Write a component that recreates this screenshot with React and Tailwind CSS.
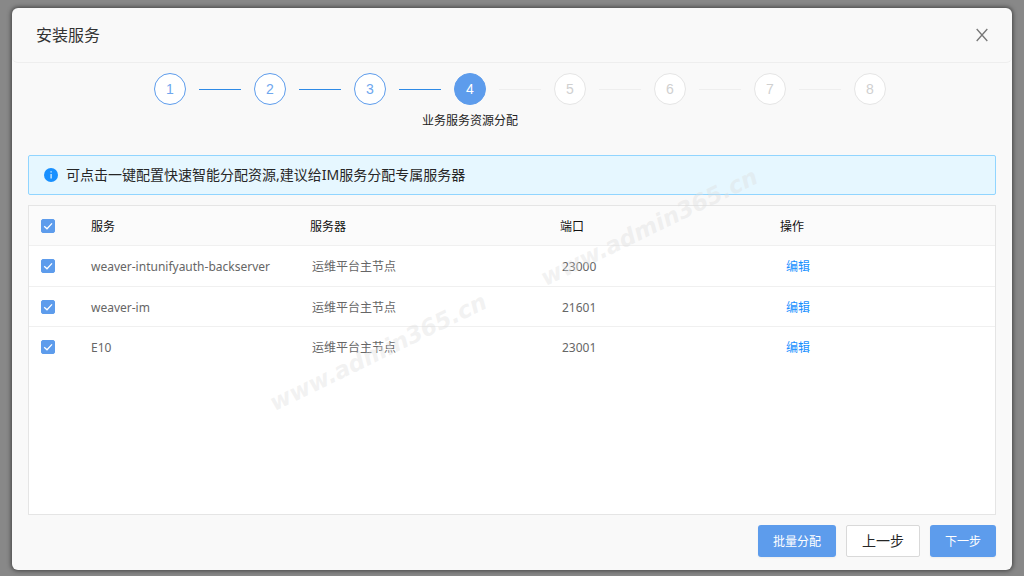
import { useState } from 'react';
import clsx from 'clsx';

const STEPS = ['', '', '', '业务服务资源分配', '', '', '', ''];
const CURRENT = 3;

const SERVICES = [
  { name: 'weaver-intunifyauth-backserver', server: '运维平台主节点', port: 23000 },
  { name: 'weaver-im', server: '运维平台主节点', port: 21601 },
  { name: 'E10', server: '运维平台主节点', port: 23001 },
];

function Checkbox({ label, checked, onChange }) {
  return (
    <span className="grid h-3.5 w-3.5">
      <input
        type="checkbox"
        aria-label={label}
        checked={checked}
        onChange={onChange}
        className="peer col-start-1 row-start-1 h-3.5 w-3.5 appearance-none rounded-xs border border-gray-300 bg-white checked:border-[#5d9cec] checked:bg-[#5d9cec]"
      />
      <svg
        viewBox="0 0 14 14"
        className="pointer-events-none col-start-1 row-start-1 hidden h-3.5 w-3.5 peer-checked:block"
        fill="none"
        stroke="#fff"
        strokeWidth="1.3"
      >
        <path d="M3.2 7.2 6 9.8 11 4.4" />
      </svg>
    </span>
  );
}

function Steps() {
  return (
    <ol className="flex justify-center pt-2.5 pl-4 font-['Liberation_Sans','Noto_Sans_CJK_SC',sans-serif]">
      {STEPS.map((label, i) => (
        <li key={i} className="flex items-start">
          {i > 0 && (
            <span className={clsx('mx-[13px] mt-4 h-px w-[42px]', i <= CURRENT ? 'bg-[#2e8ae6]' : 'bg-[#eeeeee]')} />
          )}
          <div className="flex w-8 flex-col items-center">
            <span
              className={clsx(
                'flex h-8 w-8 items-center justify-center rounded-full border text-sm',
                i < CURRENT && 'border-[#5d9cec] bg-white text-[#6fa7ee]',
                i === CURRENT && 'border-[#5d9cec] bg-[#5d9cec] text-white',
                i > CURRENT && 'border-[#e5e5e5] bg-white text-[#d0d0d0]'
              )}
            >
              {i + 1}
            </span>
            <span className="mt-1.5 h-5 text-xs leading-5 whitespace-nowrap text-[#222222]">{label}</span>
          </div>
        </li>
      ))}
    </ol>
  );
}

function Watermark({ className }) {
  return (
    <span
      aria-hidden="true"
      className={clsx(
        "pointer-events-none absolute -rotate-[26deg] font-['DejaVu_Sans',sans-serif] text-[23px] leading-6 font-bold whitespace-nowrap text-[#dddddd]/40 italic select-none",
        className
      )}
    >
      www.admin365.cn
    </span>
  );
}

export default function App() {
  const [selected, setSelected] = useState(SERVICES.map(() => true));
  const allSelected = selected.every(Boolean);

  const toggle = (index) => {
    setSelected(selected.map((value, i) => (i === index ? !value : value)));
  };

  return (
    <div className="flex min-h-screen flex-col bg-[#888888] px-3 pt-2 pb-1.5 font-['Noto_Sans','Noto_Sans_CJK_SC',sans-serif]">
      <div role="dialog" aria-labelledby="title" className="relative flex flex-1 flex-col rounded-md bg-[#f9f9f9] shadow-[0_0_4px_1px_rgba(0,0,0,0.5)]">
        {/* Header */}
        <div className="flex h-[55px] items-center justify-between rounded-md border-b border-[#eeeeee] px-6">
          <h1 id="title" className="text-base text-[#333333]">安装服务</h1>
          <button aria-label="关闭" className="text-[#777777]">
            <svg width="12" height="14" viewBox="0 0 12 14" fill="none" stroke="currentColor" strokeWidth="1.3">
              <path d="M.7 1 11.3 13M11.3 1 .7 13" />
            </svg>
          </button>
        </div>

        <Steps />

        <div className="flex flex-1 flex-col gap-2.5 px-4 pt-6 pb-[13px]">
          {/* Tip */}
          <div className="flex h-10 items-center gap-2 rounded-xs border border-[#91d5ff] bg-[#e6f7ff] px-[15px] text-sm text-[#262626]">
            <svg width="14" height="14" viewBox="0 0 14 14">
              <circle cx="7" cy="7" r="7" fill="#1890ff" />
              <path d="M6.5 3.3h1.2v1.3H6.5zM6.5 5.9h1.2v4.6H6.5z" fill="#e6f7ff" />
            </svg>
            <p>可点击一键配置快速智能分配资源,建议给IM服务分配专属服务器</p>
          </div>

          {/* Services */}
          <div className="flex-1 border border-[#e5e5e5] bg-white">
            <table className="w-full table-fixed border-separate border-spacing-0 text-left text-xs">
              <colgroup>
                <col className="w-[50px]" />
                <col className="w-[219px]" />
                <col className="w-[250px]" />
                <col className="w-[220px]" />
                <col />
              </colgroup>
              <thead className="text-[#111111]">
                <tr className="h-10 bg-[#fbfbfb] *:border-b *:border-[#f0f0f0] *:pl-3 *:font-normal">
                  <th>
                    <Checkbox
                      label="全选"
                      checked={allSelected}
                      onChange={() => setSelected(SERVICES.map(() => !allSelected))}
                    />
                  </th>
                  <th className="pt-0.5">服务</th>
                  <th className="pt-0.5">服务器</th>
                  <th className="pt-0.5">端口</th>
                  <th className="pt-0.5">操作</th>
                </tr>
              </thead>
              <tbody className="text-[#666666]">
                {SERVICES.map((service, i) => (
                  <tr key={service.name} className="h-10 *:border-b *:border-[#f0f0f0] first:h-[41px] last:*:border-transparent">
                    <td className="pl-3">
                      <Checkbox label={service.name} checked={selected[i]} onChange={() => toggle(i)} />
                    </td>
                    <td className="pt-0.5 pl-3">{service.name}</td>
                    <td className="pt-0.5 pl-3.5">{service.server}</td>
                    <td className="pt-0.5 pl-3.5">{service.port}</td>
                    <td className="pt-0.5 pl-[18px]">
                      <a href="#edit" className="text-[#1890ff]">编辑</a>
                    </td>
                  </tr>
                ))}
              </tbody>
            </table>
          </div>

          {/* Footer */}
          <div className="flex justify-end gap-2.5">
            <button className="h-8 w-[78px] rounded-[3px] bg-[#5d9cec] pt-0.5 text-xs text-white shadow-xs">批量分配</button>
            <button className="h-8 w-[74px] rounded-xs border border-[#d9d9d9] bg-white text-sm text-[#262626]">上一步</button>
            <button className="h-8 w-[66px] rounded-[3px] bg-[#5d9cec] pt-0.5 text-xs text-white shadow-xs">下一步</button>
          </div>
        </div>

        <Watermark className="top-[332px] left-[247px]" />
        <Watermark className="top-[207px] left-[518px]" />
      </div>
    </div>
  );
}
